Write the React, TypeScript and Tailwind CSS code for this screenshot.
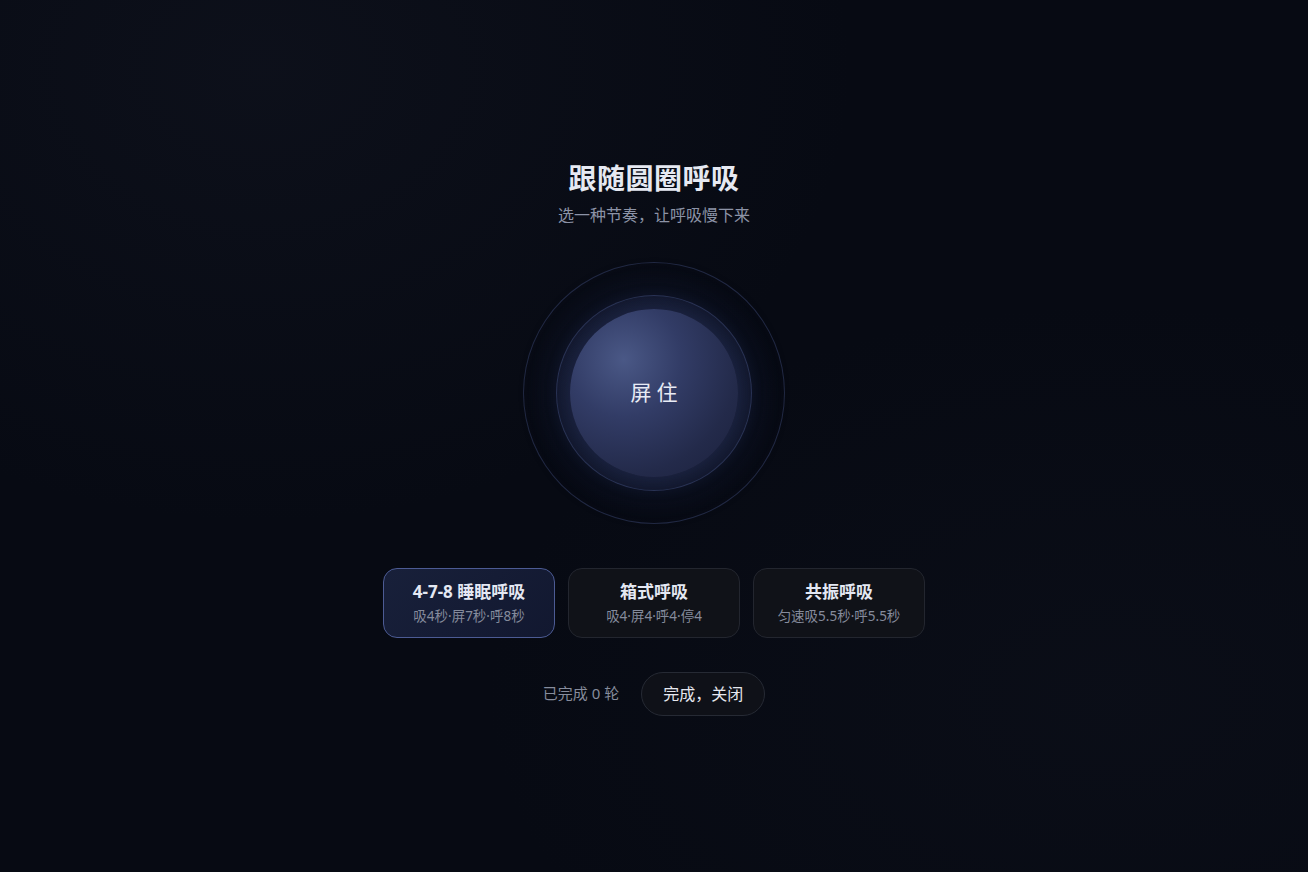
const modes = [
  { title: "4-7-8 睡眠呼吸", desc: "吸4秒·屏7秒·呼8秒", active: true },
  { title: "箱式呼吸", desc: "吸4·屏4·呼4·停4", active: false },
  { title: "共振呼吸", desc: "匀速吸5.5秒·呼5.5秒", active: false },
];

export default function App() {
  return (
    <div
      className="relative flex h-[872px] w-full flex-col items-center justify-center overflow-hidden bg-[#070a13] text-white"
      style={{ fontFamily: '"Noto Sans", "Noto Sans CJK SC", sans-serif' }}
    >
      {/* blurred backdrop */}
      <div className="pointer-events-none absolute inset-0 bg-[radial-gradient(ellipse_at_20%_8%,rgba(36,40,56,0.2),transparent_40%),radial-gradient(ellipse_at_85%_80%,rgba(30,34,48,0.15),transparent_40%)]" />

      <div className="relative flex flex-col items-center pt-[4px]">
        <h1 className="text-[28px] font-bold leading-[34px] tracking-[0.5px] text-[#e6e9f2]">
          跟随圆圈呼吸
        </h1>
        <p className="mt-[9px] text-[16px] leading-[22px] text-[#8c93a6]">
          选一种节奏，让呼吸慢下来
        </p>

        {/* breathing circle */}
        <div className="mt-[36px] flex h-[262px] w-[262px] items-center justify-center rounded-full border border-[#28314f]/80 bg-[radial-gradient(circle,rgba(40,52,95,0.16)_0%,rgba(10,14,26,0)_70%)]">
          <div className="flex h-[196px] w-[196px] items-center justify-center rounded-full border border-[#2f395d]/80 bg-[radial-gradient(circle,rgba(30,38,70,0.55)_60%,rgba(18,23,42,0.4)_100%)] shadow-[0_0_40px_rgba(50,64,120,0.2)]">
            <div className="flex h-[168px] w-[168px] items-center justify-center rounded-full bg-[radial-gradient(circle_at_32%_30%,#4a5886_0%,#323c66_35%,#232a4a_70%,#1b203c_100%)] shadow-[0_0_26px_rgba(60,76,140,0.3)]">
              <span className="pl-[5px] text-[21px] tracking-[5px] text-[#e8ebf5]">屏住</span>
            </div>
          </div>
        </div>

        {/* modes */}
        <div className="mt-[44px] flex gap-[13px]">
          {modes.map((m) => (
            <button
              key={m.title}
              className={`flex h-[70px] w-[172px] flex-col items-center justify-center rounded-[14px] border ${
                m.active
                  ? "border-[#4c5b94] bg-[linear-gradient(135deg,#18203a,#121830)]"
                  : "border-[#23262f] bg-[#101218]"
              }`}
            >
              <span className="text-[17px] font-bold leading-[23px] text-[#e4e8f3]">{m.title}</span>
              <span className="mt-[3px] text-[13.5px] leading-[20px] text-[#858b9c]">{m.desc}</span>
            </button>
          ))}
        </div>

        {/* footer */}
        <div className="mt-[34px] flex items-center gap-[22px]">
          <span className="text-[15px] text-[#868c9c]">已完成 0 轮</span>
          <button className="h-[44px] w-[124px] rounded-full border border-[#262a34] bg-[#0f1118] text-[16px] text-[#e6e8ef]">
            完成，关闭
          </button>
        </div>
      </div>
    </div>
  );
}
